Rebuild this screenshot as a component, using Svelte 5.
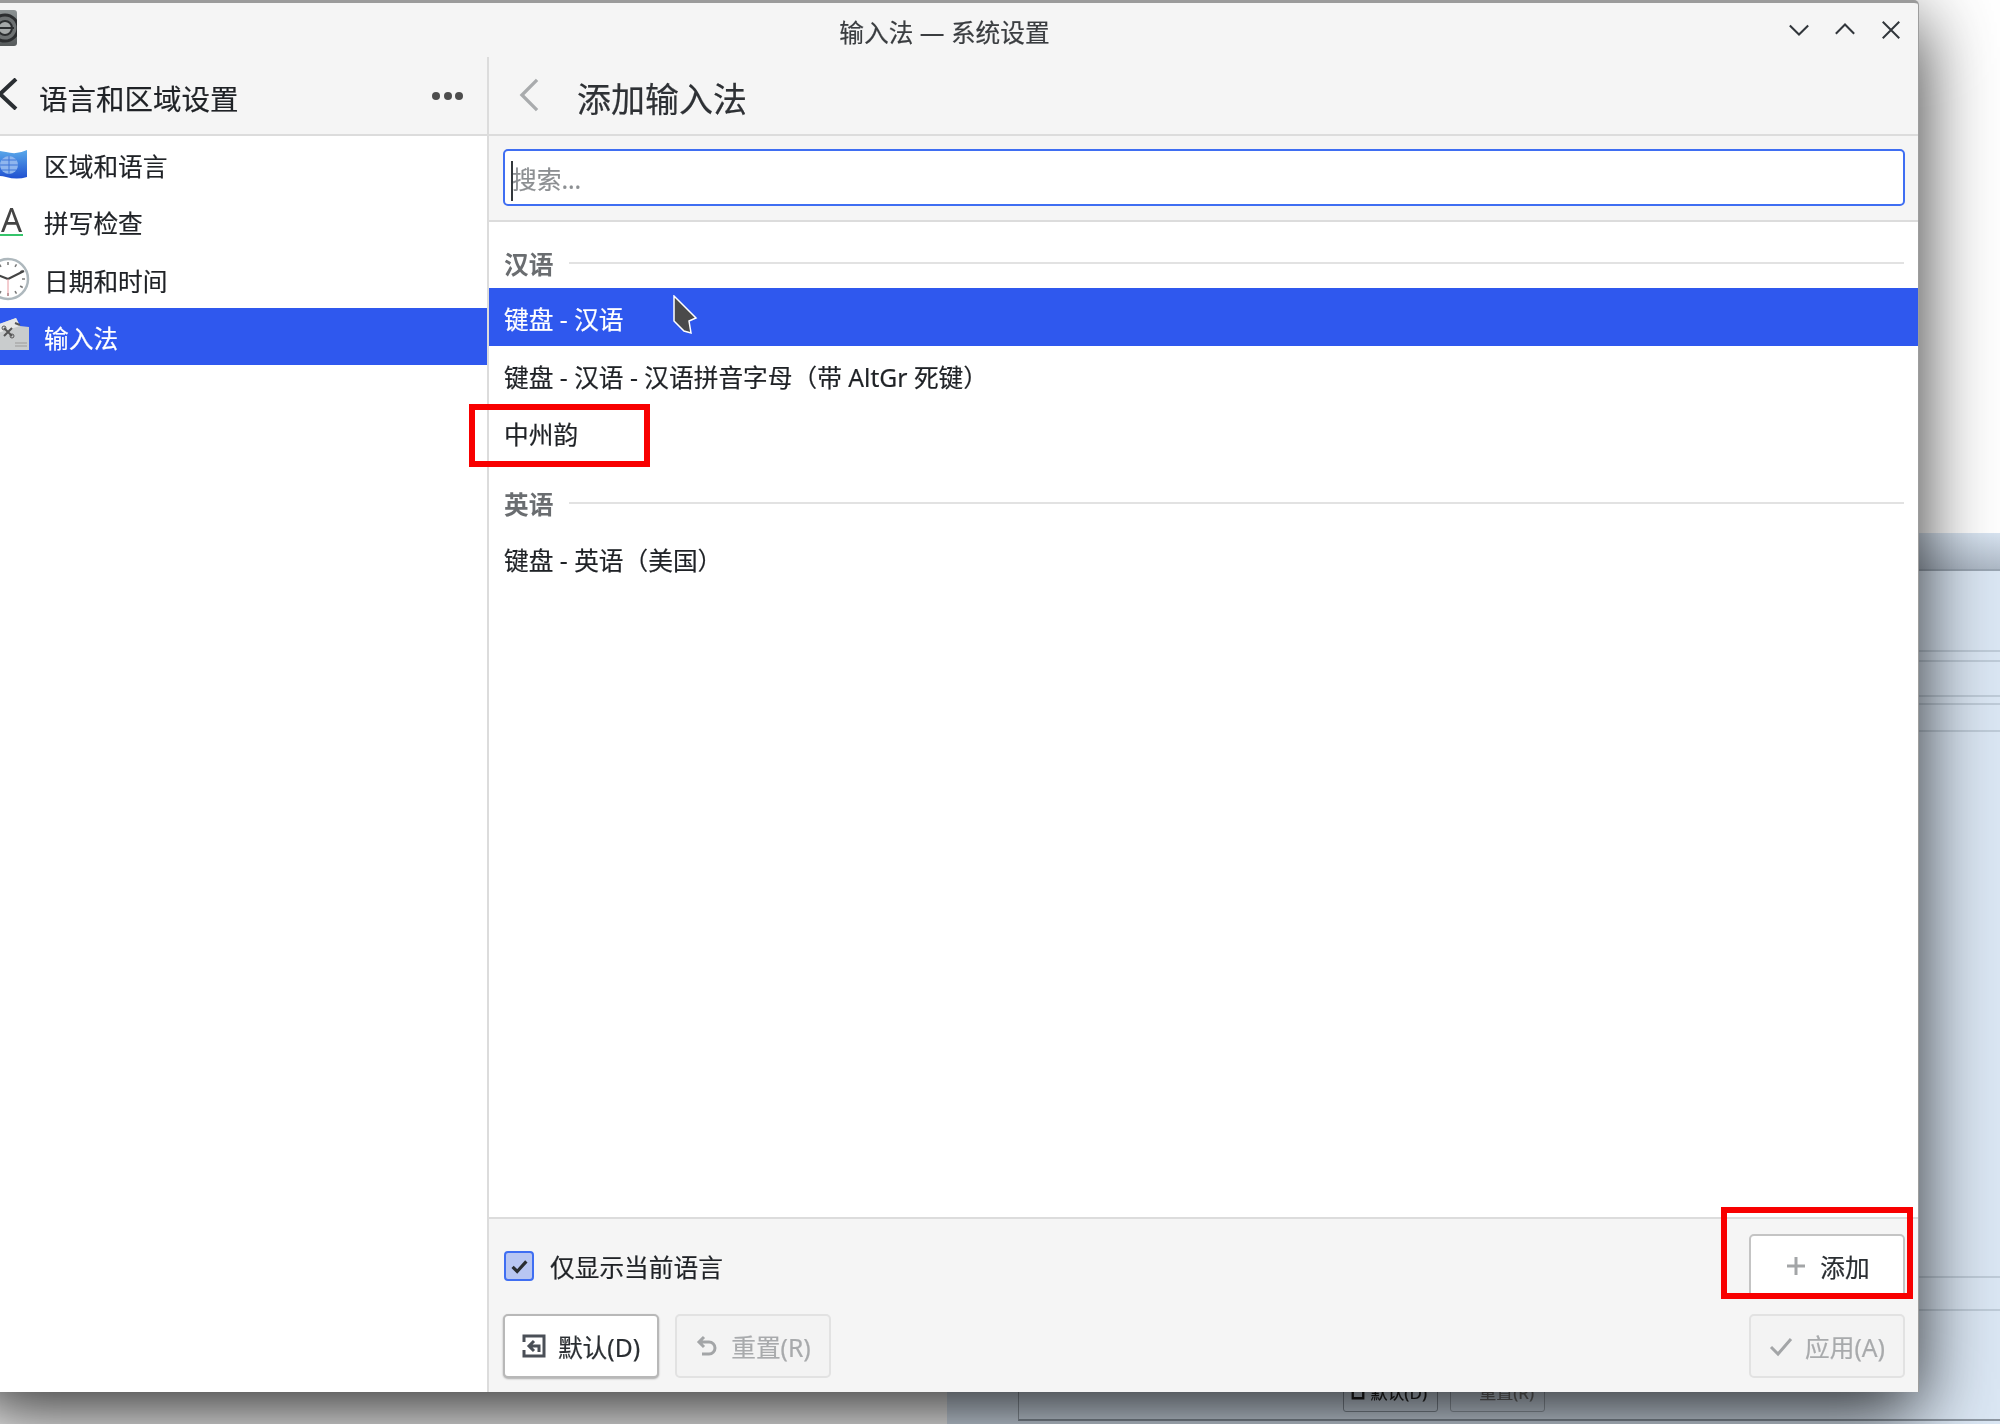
<script>
  const sideItems = [
    { id: 'region', label: '区域和语言' },
    { id: 'spell', label: '拼写检查' },
    { id: 'clock', label: '日期和时间' },
    { id: 'keys', label: '输入法', active: true }
  ];
  const groups = [
    { name: '汉语', rows: [
      { label: '键盘 - 汉语', active: true },
      { label: '键盘 - 汉语 - 汉语拼音字母（带 AltGr 死键）' },
      { label: '中州韵' }
    ] },
    { name: '英语', rows: [ { label: '键盘 - 英语（美国）' } ] }
  ];
  const ticks = [0, 30, 60, 90, 120, 150, 180, 210, 240, 270, 300, 330];
</script>

<div class="desk">
  <div class="back-layer">
    <div class="back-win">
      <div class="back-title"></div>
      <div class="back-body">
        <div class="back-row h81"></div>
        <div class="back-row h10"></div>
        <div class="back-row h35"></div>
        <div class="back-row h8"></div>
        <div class="back-row h27"></div>
      </div>
      <div class="back-lower">
        <div class="back-row h12"></div>
        <div class="back-row h33"></div>
      </div>
      <div class="back-foot">
        <span class="back-btn">
          <svg viewBox="0 0 24 24"><path d="M3 3v18h18V3" /></svg>
          默认(D)
        </span>
        <span class="back-btn dim">重置(R)</span>
      </div>
    </div>
  </div>

  <div class="window">
    <div class="titlebar">
      <svg class="app-icon" viewBox="0 0 36 36">
        <defs>
          <linearGradient id="appg" x1="0" y1="0" x2="0" y2="1">
            <stop offset="0" stop-color="#8d9394" />
            <stop offset="1" stop-color="#55595a" />
          </linearGradient>
        </defs>
        <rect width="36" height="36" rx="3" fill="url(#appg)" />
        <circle cx="24" cy="18" r="13" fill="#6d7172" stroke="#2c2e30" stroke-width="3" />
        <circle cx="24" cy="18" r="7" fill="#a4a8a8" stroke="#2c2e30" stroke-width="2" />
        <path d="M15 18h18" stroke="#2c2e30" stroke-width="2" />
      </svg>
      <span class="win-title">输入法 — 系统设置</span>
      <div class="controls">
        <svg viewBox="0 0 24 24"><path d="M2 7l10 10L22 7" /></svg>
        <svg viewBox="0 0 24 24"><path d="M2 16L12 6l10 10" /></svg>
        <svg viewBox="0 0 24 24"><path d="M3 3l18 18M21 3L3 21" /></svg>
      </div>
    </div>

    <div class="panes">
      <aside class="sidebar">
        <div class="side-head">
          <svg class="back" viewBox="0 0 20 32"><path d="M18 1L2 16l16 15" /></svg>
          <span class="side-title">语言和区域设置</span>
          <span class="dots"><i></i><i></i><i></i></span>
        </div>
        <div class="side-list">
          {#each sideItems as item}
            <div class="side-row" class:active={item.active}>
              <svg class="side-icon" viewBox="0 0 44 44">
                {#if item.id === 'region'}
                  <defs>
                    <linearGradient id="flag" x1="0" y1="0" x2="0" y2="1">
                      <stop offset="0" stop-color="#5aa9ea" />
                      <stop offset="1" stop-color="#1f4fd0" />
                    </linearGradient>
                  </defs>
                  <path d="M0 10q10-4 21-1t21-2v27q-10 3-21 0T0 36z" fill="url(#flag)" />
                  <circle cx="24" cy="22" r="9" fill="#8fb6ee" />
                  <path d="M15 22h18M24 13v18M17 17h14M17 27h14" stroke="#3d74d8" stroke-width="1" fill="none" />
                {:else if item.id === 'spell'}
                  <text x="26.500" y="32" class="a-glyph">A</text>
                  <rect x="6" y="34" width="32" height="2" fill="#35c46a" />
                {:else if item.id === 'clock'}
                  <circle cx="23" cy="22" r="20" fill="#fff" stroke="#aeb8bd" stroke-width="2.500" />
                  {#each ticks as t}
                    <path d="M23 5v3" stroke="#777" stroke-width="1.500" transform="rotate({t} 23 22)" />
                  {/each}
                  <path d="M23 22l-10-4M23 22l16-8" stroke="#444" stroke-width="2" fill="none" />
                  <path d="M23 22v17" stroke="#e89aa0" stroke-width="1" />
                {:else}
                  <path d="M6 12l25-9 4 8 9 1v23H6z" fill="#c9cccd" />
                  <path d="M6 12l25-9 4 8-29 9z" fill="#e6e7e7" />
                  <path d="M19 13l8 8m0-8l-8 8M30 8l5 2" stroke="#555" stroke-width="2" />
                  <circle cx="19" cy="13" r="2" fill="none" stroke="#555" />
                  <circle cx="27" cy="21" r="2" fill="none" stroke="#555" />
                  <path d="M30 28h12M30 31h12" stroke="#aaa" stroke-width="1.500" />
                {/if}
              </svg>
              <span>{item.label}</span>
            </div>
          {/each}
        </div>
      </aside>

      <main class="content">
        <div class="page-head">
          <svg class="page-back" viewBox="0 0 22 36"><path d="M19 2L3 18l16 16" /></svg>
          <span class="page-title">添加输入法</span>
        </div>
        <div class="search-bar">
          <input class="search" placeholder="搜索..." />
        </div>
        <div class="list">
          {#each groups as group}
            <div class="group-head">
              <span>{group.name}</span>
              <div class="rule"></div>
            </div>
            {#each group.rows as row}
              <div class="row" class:active={row.active}>{row.label}</div>
            {/each}
          {/each}
        </div>
        <div class="footer">
          <div class="foot-line">
            <label class="check">
              <span class="box">
                <svg viewBox="0 0 24 24"><path d="M5 13l5 5L20 7" /></svg>
              </span>
              仅显示当前语言
            </label>
            <button class="btn add">
              <svg viewBox="0 0 24 24"><path d="M12 3v18M3 12h18" /></svg>
              添加
            </button>
          </div>
          <div class="foot-line">
            <div class="left-btns">
              <button class="btn raised">
                <svg viewBox="0 0 24 24" class="dark"><path d="M2 8V2h20v20H2v-6M7 12h10v6M12 7l-5 5 5 5" /></svg>
                默认(D)
              </button>
              <button class="btn off">
                <svg viewBox="0 0 24 24"><path d="M9 3L4 8l5 5M4 8h10a5.500 5.500 0 0 1 0 12H7" /></svg>
                重置(R)
              </button>
            </div>
            <button class="btn off">
              <svg viewBox="0 0 24 24"><path d="M2 13l7 7L22 5" /></svg>
              应用(A)
            </button>
          </div>
        </div>
      </main>
    </div>

    <span class="caret"></span>
  </div>

  <svg class="cursor" viewBox="0 0 26 40">
    <path d="M2 1l22 22-7 3 2 12-7-2-10-10z" fill="#4a4a4a" stroke="#fff" stroke-width="1.500" />
  </svg>
  <div class="mark mark-row"></div>
  <div class="mark mark-add"></div>
</div>

<style>
  :global(body) {
    margin: 0;
    background: #fff;
  }
  .desk {
    position: relative;
    width: 2000px;
    height: 1424px;
    overflow: hidden;
    background: #fff;
    font-family: "Noto Sans", "Noto Sans CJK SC", sans-serif;
    font-size: 24.7px;
    color: #1f2226;
    -webkit-text-stroke: 0.2px;
    filter: blur(0.5px);
  }

  /* blurred stuff behind the dialog */
  .back-layer {
    position: absolute;
    left: 947px;
    top: 533px;
    right: 0;
    bottom: 0;
    background: #dbe7f4;
  }
  .back-win {
    position: absolute;
    left: 71px;
    top: 0;
    right: 0;
    bottom: 3px;
    display: flex;
    flex-direction: column;
    border-left: 1px solid #9aa4ae;
    border-bottom: 2px solid #8d97a2;
  }
  .back-title {
    height: 36px;
    flex: none;
    background: linear-gradient(#d8e4f1, #aeb9c6);
    border-bottom: 2px solid #9aa6b3;
  }
  .back-body {
    flex: 1;
  }
  .back-row {
    border-bottom: 2px solid #bfccd9;
  }
  .h81 { height: 79px; }
  .h10 { height: 8px; }
  .h35 { height: 33px; }
  .h8 { height: 6px; }
  .h27 { height: 25px; }
  .h12 { height: 10px; }
  .h33 { height: 31px; }
  .back-foot {
    height: 108px;
    box-sizing: border-box;
    flex: none;
    display: flex;
    align-items: flex-end;
    gap: 12px;
    padding: 0 0 7px 324px;
    font-size: 17px;
  }
  .back-btn {
    width: 95px;
    height: 68px;
    box-sizing: border-box;
    display: flex;
    align-items: flex-end;
    justify-content: flex-end;
    gap: 5px;
    padding: 0 10px 7px 0;
    border: 1px solid #8d97a2;
    border-radius: 3px;
    color: #222;
  }
  .back-btn svg {
    width: 14px;
    height: 14px;
    margin-bottom: 4px;
    fill: none;
    stroke: #222;
    stroke-width: 4;
  }
  .back-btn.dim {
    color: #777;
    border-color: #a3adb7;
  }

  .window {
    position: absolute;
    left: -29px;
    top: 0;
    width: 1948px;
    height: 1392px;
    box-sizing: border-box;
    display: flex;
    flex-direction: column;
    background: #f5f5f5;
    border-top: 3px solid #9b9b9b;
    border-right: 1px solid #9d9d9d;
    border-radius: 0 5px 0 0;
    box-shadow: 0 22px 75px rgba(0, 0, 0, 0.82);
  }
  .titlebar {
    height: 54px;
    flex: none;
    position: relative;
    display: flex;
    align-items: center;
    justify-content: center;
  }
  .app-icon {
    position: absolute;
    left: 10px;
    top: 7px;
    width: 36px;
    height: 36px;
  }
  .win-title {
    color: #3a3d40;
    margin-top: 2px;
  }
  .controls {
    position: absolute;
    right: 16px;
    top: 16px;
    display: flex;
    gap: 24px;
  }
  .controls svg {
    width: 22px;
    height: 22px;
    fill: none;
    stroke: #31363b;
    stroke-width: 2.200;
  }
  .panes {
    flex: 1;
    display: flex;
    min-height: 0;
  }
  .sidebar {
    width: 516px;
    flex: none;
    display: flex;
    flex-direction: column;
    background: #fff;
    border-right: 2px solid #dcdcdc;
  }
  .side-head {
    height: 79px;
    box-sizing: border-box;
    flex: none;
    display: flex;
    align-items: center;
    background: #f5f5f5;
    border-bottom: 2px solid #dcdcdc;
    padding: 3px 24px 0 27px;
  }
  .back {
    width: 20px;
    height: 32px;
    fill: none;
    stroke: #2a2e32;
    stroke-width: 4;
    margin-top: -6px;
  }
  .side-title {
    font-size: 28.5px;
    margin-left: 21px;
    flex: 1;
  }
  .dots {
    display: flex;
    gap: 3.500px;
    margin-top: -2px;
  }
  .dots i {
    width: 8px;
    height: 8px;
    border-radius: 50%;
    background: #4d4d4d;
  }
  .side-row {
    height: 57.300px;
    box-sizing: border-box;
    display: flex;
    align-items: center;
    gap: 15px;
    padding-left: 14px;
  }
  .side-row span {
    padding-top: 1px;
  }
  .side-row.active,
  .row.active {
    background: #2f58ee;
    color: #fff;
  }
  .side-icon {
    width: 44px;
    height: 44px;
    flex: none;
    overflow: visible;
  }
  .a-glyph {
    font-family: "Noto Sans", sans-serif;
    font-size: 33px;
    fill: #444;
    stroke: none;
    text-anchor: middle;
  }
  .content {
    flex: 1;
    min-width: 0;
    display: flex;
    flex-direction: column;
    background: #fff;
  }
  .page-head {
    height: 79px;
    box-sizing: border-box;
    flex: none;
    display: flex;
    align-items: center;
    gap: 37px;
    padding: 3px 0 0 30px;
    background: #f5f5f5;
    border-bottom: 2px solid #dcdcdc;
  }
  .page-back {
    width: 21px;
    height: 34px;
    fill: none;
    stroke: #a9abad;
    stroke-width: 3.500;
    margin-top: -4px;
  }
  .page-title {
    font-size: 34px;
    color: #2e3135;
  }
  .search-bar {
    height: 86px;
    box-sizing: border-box;
    flex: none;
    padding: 13px 13px 14px 14px;
    background: #f5f5f5;
    border-bottom: 2px solid #dcdcdc;
  }
  .search {
    display: block;
    width: 100%;
    height: 57px;
    box-sizing: border-box;
    padding: 4px 7px 0;
    border: 2px solid #3f6ef2;
    border-radius: 5px;
    background: #fff;
    font: inherit;
    outline: none;
  }
  .search::placeholder {
    color: #8c8f92;
    opacity: 1;
  }
  .caret {
    position: absolute;
    left: 540px;
    top: 158px;
    width: 2px;
    height: 40px;
    background: #33383c;
  }
  .list {
    flex: 1;
    padding-top: 19px;
  }
  .group-head {
    height: 47px;
    box-sizing: border-box;
    display: flex;
    align-items: center;
    gap: 16px;
    padding: 0 14px 3px 15px;
    font-weight: 700;
    color: #6a6d70;
    -webkit-text-stroke: 0;
  }
  .rule {
    flex: 1;
    height: 2px;
    background: #e2e2e2;
  }
  .row {
    height: 57.500px;
    box-sizing: border-box;
    display: flex;
    align-items: center;
    padding: 3px 0 0 15px;
  }
  .row + .group-head {
    margin-top: 20px;
    margin-bottom: 1px;
  }
  .footer {
    height: 175px;
    box-sizing: border-box;
    flex: none;
    display: flex;
    flex-direction: column;
    gap: 16px;
    padding: 15px 13px 0 14px;
    background: #f5f5f5;
    border-top: 2px solid #dcdcdc;
  }
  .foot-line {
    display: flex;
    align-items: center;
    justify-content: space-between;
  }
  .check {
    display: flex;
    align-items: center;
    gap: 16px;
    padding-left: 1px;
  }
  .box {
    width: 30px;
    height: 30px;
    box-sizing: border-box;
    border: 2px solid #3f6ef2;
    border-radius: 4px;
    background: #b8c6f2;
    display: flex;
    align-items: center;
    justify-content: center;
  }
  .box svg {
    width: 22px;
    height: 22px;
    fill: none;
    stroke: #2a2e32;
    stroke-width: 3.500;
  }
  .left-btns {
    display: flex;
    gap: 16px;
  }
  .btn {
    width: 156px;
    height: 64px;
    box-sizing: border-box;
    display: flex;
    align-items: center;
    justify-content: center;
    gap: 12px;
    font: inherit;
    -webkit-text-stroke: 0.2px;
    color: #2a2e32;
    background: #fff;
    border: 2px solid #c4c4c4;
    border-radius: 5px;
    padding: 0;
  }
  .btn svg {
    width: 24px;
    height: 24px;
    fill: none;
    stroke: #a3a5a7;
    stroke-width: 3;
    flex: none;
  }
  .btn svg.dark {
    stroke: #4a4f57;
  }
  .raised {
    box-shadow: 0 1px 2px rgba(0, 0, 0, 0.3);
    border-color: #b8b8b8;
  }
  .off {
    background: #f3f3f3;
    color: #a8aaac;
    border-color: #e2e2e2;
  }

  .cursor {
    position: absolute;
    left: 672px;
    top: 295px;
    width: 26px;
    height: 40px;
  }
  .mark {
    position: absolute;
    box-sizing: border-box;
    border: 6px solid #f80000;
  }
  .mark-row {
    left: 469px;
    top: 404px;
    width: 181px;
    height: 63px;
  }
  .mark-add {
    left: 1721px;
    top: 1207px;
    width: 192px;
    height: 92px;
  }
</style>
